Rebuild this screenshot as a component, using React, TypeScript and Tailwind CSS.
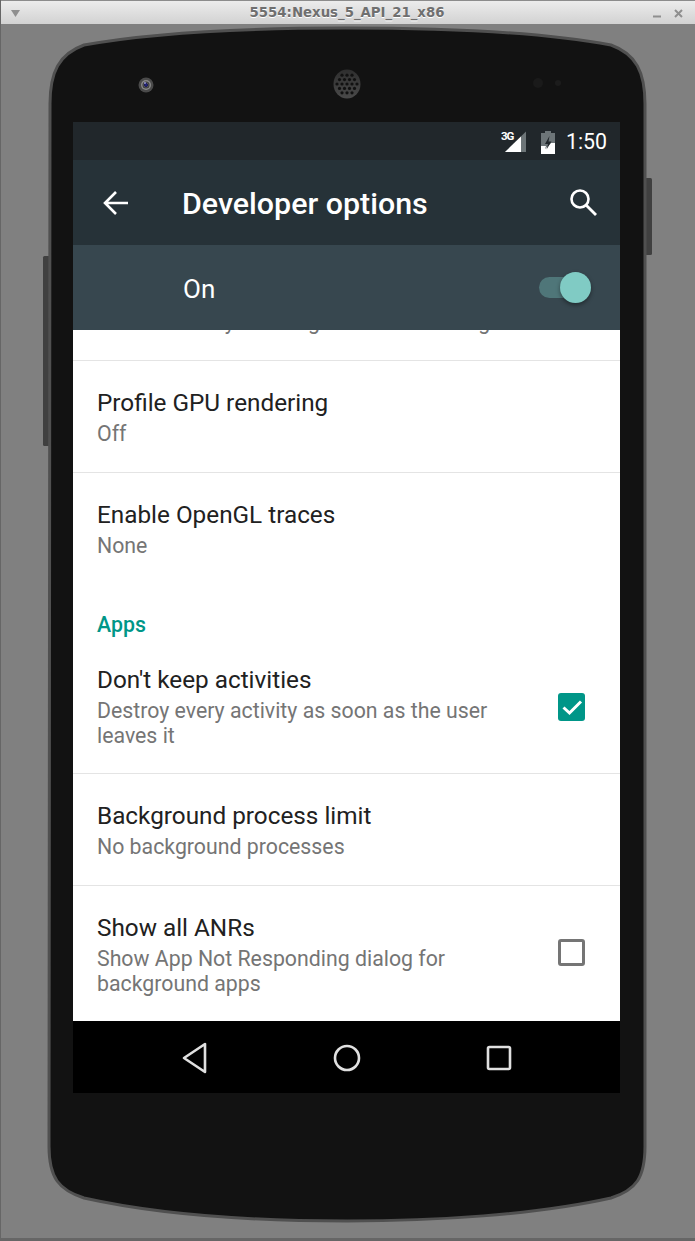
import React from "react";

const speakerHoles: { x: number; y: number }[] = [];
for (let r = -4; r <= 4; r++) {
    for (let c = -4; c <= 4; c++) {
        const x = 347 + c * 5 + (r % 2 ? 2.5 : 0);
        const y = 84 + r * 4.4;
        if (Math.hypot((x - 347) / 12, (y - 84) / 13) < 1) speakerHoles.push({ x, y });
    }
}

const PhoneBody = () => (
    <svg className="absolute -left-px top-0" width="695" height="1241" viewBox="0 0 695 1241">
        <defs>
            <radialGradient id="cameraLens" cx="0.5" cy="0.5" r="0.5">
                <stop offset="0" stopColor="#2a2a90" />
                <stop offset="0.45" stopColor="#1d1d5a" />
                <stop offset="0.6" stopColor="#555" />
                <stop offset="1" stopColor="#333" />
            </radialGradient>
            <linearGradient id="speakerDisc" x1="0" y1="0" x2="0" y2="1">
                <stop offset="0" stopColor="#2e2e2e" />
                <stop offset="1" stopColor="#4a4a4a" />
            </linearGradient>
        </defs>
        <rect x="43" y="256" width="7" height="190" rx="1.5" fill="#404040" />
        <rect x="645" y="178" width="7" height="77" rx="1.5" fill="#404040" />
        <path
            d="M50 104 C50 72 59 54 84 45 C160 31 260 28 347 28 C434 28 535 31 611 45 C636 54 645 72 645 104 L645 1146 C645 1178 636 1190 611 1198 C535 1215 434 1221 347 1221 C260 1221 160 1215 84 1198 C59 1190 49 1178 49 1146 Z"
            fill="#121212"
            stroke="#505050"
            strokeWidth="3"
        />
        <circle cx="146" cy="85" r="7.5" fill="#4a4a4a" />
        <circle cx="146" cy="85" r="5" fill="#8a8a8a" />
        <circle cx="146" cy="85" r="3.5" fill="url(#cameraLens)" />
        <circle cx="145" cy="83" r="0.9" fill="#9a9ae0" />
        <ellipse cx="347" cy="84" rx="13.5" ry="14.5" fill="url(#speakerDisc)" />
        {speakerHoles.map((h, i) => (
            <circle key={i} cx={h.x} cy={h.y} r="1.6" fill="#111111" />
        ))}
        <circle cx="538" cy="83" r="5" fill="#1a1a1a" />
        <circle cx="558" cy="83" r="3" fill="#1c1c1c" />
    </svg>
);

const TitleBar = () => (
    <div className="relative flex h-6 items-center justify-center border-t border-[#8c8c8c] bg-gradient-to-b from-[#ececec] to-[#d2d2d2]">
        <svg className="absolute left-[9px] top-[8px]" width="12" height="10" viewBox="0 0 12 10">
            <path d="M1 1 H10 L5.5 8 Z" fill="#8f8f8f" />
        </svg>
        <span className="-ml-[2px] font-['DejaVu_Sans'] text-[13.3px] font-bold text-[#6f6f6f] [text-shadow:0_1px_0_#ffffff]">
            5554:Nexus_5_API_21_x86
        </span>
        <svg className="absolute right-[8px] top-[6px]" width="36" height="14" viewBox="0 0 36 14">
            <path d="M2 9.5 H10" stroke="#8f8f8f" strokeWidth="2" />
            <path d="M24 3 L31 10 M31 3 L24 10" stroke="#8f8f8f" strokeWidth="2" />
        </svg>
    </div>
);

const StatusBar = () => (
    <div className="flex h-[38px] items-center justify-end bg-[#21272b] pr-[13px] pt-[2px]">
        <div className="relative mr-[11px] h-6 w-[30px]">
            <svg className="absolute left-0 top-0" width="30" height="24" viewBox="0 0 30 24">
                <path d="M6 22 L27 1.5 V22 Z" fill="#6d7578" />
                <path d="M6 22 L22 6.5 V22 Z" fill="#ffffff" />
            </svg>
            <span className="absolute left-[2px] top-0 text-[11.5px] font-bold leading-[12px] tracking-[-1px] text-white">3G</span>
        </div>
        <svg width="16" height="24" viewBox="0 0 16 24" className="mr-[10px]">
            <path d="M5 1 H11 V3 H15 V24 H1 V3 H5 Z" fill="#6d7578" />
            <path d="M1 16 H6 L5 19 L11 13 H15 V24 H1 Z" fill="#ffffff" />
            <path d="M9.5 6 L5 14 H8 L6.5 19.5 L11.5 11.5 H8.5 Z" fill="#21272b" />
        </svg>
        <span className="text-[21.3px] leading-none text-white">1:50</span>
    </div>
);

const Row = ({
    title,
    subtitle,
    checked,
    divider = true,
    twoLine = false,
}: {
    title: string;
    subtitle: React.ReactNode;
    checked?: boolean;
    divider?: boolean;
    twoLine?: boolean;
}) => (
    <div className={`flex items-center pl-[24px] pr-[35px] pt-[27px] ${twoLine ? "pb-[25px]" : "pb-[26px]"} ${divider ? "border-b border-[#e4e4e4]" : "mb-px"}`}>
        <div className="min-w-0 flex-1">
            <div className="text-[24.3px] leading-[30px] text-[#212121]">{title}</div>
            <div className="mt-[3px] text-[21.3px] leading-[25px] text-[#757575]">{subtitle}</div>
        </div>
        {checked === true && (
            <div className="ml-[40px] flex h-[28px] w-[27px] items-center justify-center rounded-[3px] bg-[#009688]">
                <svg width="24" height="24" viewBox="0 0 24 24">
                    <path d="M3.5 12.5 L9.5 18 L21 6.5" fill="none" stroke="#ffffff" strokeWidth="3" />
                </svg>
            </div>
        )}
        {checked === false && (
            <div className="mb-[4px] ml-[40px] h-[27px] w-[27px] rounded-[3px] border-[3px] border-[#757575]" />
        )}
    </div>
);

const App = () => {
    return (
        <div className="relative h-[1241px] w-[695px] overflow-hidden border-b-[3px] border-l border-[#666666] bg-[#808080] font-['Roboto',sans-serif]">
            <PhoneBody />
            <div className="relative">
                <TitleBar />
                <div className="pl-[72px] pt-[98px]">
                    <div className="flex h-[971px] w-[547px] flex-col bg-white">
                        <StatusBar />
                        <div className="flex h-[85px] items-center bg-[#263238] pl-[30px] pr-[22px]">
                            <svg width="26" height="26" viewBox="0 0 26 26">
                                <path d="M25 13 H2 M13 2 L2 13 L13 24" fill="none" stroke="#ffffff" strokeWidth="2.6" />
                            </svg>
                            <h1 className="ml-[53px] pt-[3px] text-[30.4px] font-medium text-white">Developer options</h1>
                            <svg className="ml-auto" width="30" height="30" viewBox="0 0 30 30">
                                <circle cx="12" cy="11" r="8.5" fill="none" stroke="#ffffff" strokeWidth="2.6" />
                                <path d="M18 17 L28 27" stroke="#ffffff" strokeWidth="2.8" />
                            </svg>
                        </div>
                        <div className="flex h-[85px] items-center bg-[#37474f] pl-[110px] pr-[36px]">
                            <span className="pt-[3px] text-[26px] text-white">On</span>
                            <div className="relative ml-auto h-[21px] w-[45px] rounded-full bg-[#4f7679]">
                                <div className="absolute -right-[7px] -top-[5px] h-[31px] w-[31px] rounded-full bg-[#80cbc4] shadow-[0_2px_4px_rgba(0,0,0,0.4)]" />
                            </div>
                        </div>
                        <div className="h-[691px] overflow-hidden">
                            {/* list is scrolled: only the tail of the first row's summary shows */}
                            <div className="-mt-[21px] border-b border-[#e4e4e4] pb-[26px] pl-[24px] text-[21.3px] leading-[25px] text-[#757575]">
                                Screen overlay showing current CPU usage
                            </div>
                            <Row title="Profile GPU rendering" subtitle="Off" />
                            <Row title="Enable OpenGL traces" subtitle="None" divider={false} />
                            <div className="pb-px pl-[24px] pt-[27px] text-[21.3px] font-medium leading-[25px] text-[#009688]">Apps</div>
                            <Row title="Don't keep activities" subtitle="Destroy every activity as soon as the user leaves it" checked twoLine />
                            <Row title="Background process limit" subtitle="No background processes" />
                            <Row title="Show all ANRs" subtitle="Show App Not Responding dialog for background apps" checked={false} divider={false} />
                        </div>
                        <div className="flex h-[72px] items-center justify-center gap-[114px] bg-black pt-px">
                            <svg width="38" height="34" viewBox="0 0 38 34">
                                <path d="M29 3 V31 L8 17 Z" fill="none" stroke="#e0e0e0" strokeWidth="2.6" strokeLinejoin="round" />
                            </svg>
                            <svg width="38" height="34" viewBox="0 0 38 34">
                                <circle cx="19" cy="17" r="12" fill="none" stroke="#e0e0e0" strokeWidth="2.6" />
                            </svg>
                            <svg width="38" height="34" viewBox="0 0 38 34">
                                <rect x="8" y="6" width="22" height="22" rx="1.5" fill="none" stroke="#e0e0e0" strokeWidth="2.6" />
                            </svg>
                        </div>
                    </div>
                </div>
            </div>
        </div>
    );
};

export default App;
